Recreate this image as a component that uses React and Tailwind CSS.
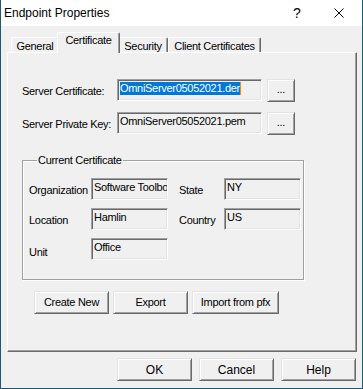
import React from "react";

// Win32 classic dialog: Endpoint Properties / Certificate tab

const raised =
  "border border-t-[#e3e3e3] border-l-[#e3e3e3] border-r-[#696969] border-b-[#696969] shadow-[inset_1px_1px_0_#fff,inset_-1px_-1px_0_#a0a0a0] bg-[#f0f0f0]";
const sunken =
  "border border-t-[#a0a0a0] border-l-[#a0a0a0] border-r-white border-b-white shadow-[inset_1px_1px_0_#696969,inset_-1px_-1px_0_#e3e3e3] bg-[#f0f0f0]";

const Button = ({ children, className = "" }) => (
  <button className={`${raised} h-[23px] flex items-center justify-center text-black ${className}`}>
    {children}
  </button>
);

const Field = ({ value, selected, className = "" }) => (
  <div className={`${sunken} h-[22px] px-[2px] pt-[2px] overflow-hidden whitespace-nowrap leading-[13px] ${className}`}>
    {selected ? (
      <span className="inline-flex items-stretch">
        <span className="bg-[#0078d7] text-white">{value}</span>
        <span className="w-[1px] bg-[#ff8c00]" />
      </span>
    ) : (
      <span>{value}</span>
    )}
  </div>
);

const Label = ({ children }) => (
  <div className="h-[22px] flex items-center pt-[3px] whitespace-nowrap">{children}</div>
);

const tabs = [
  { name: "General", w: "w-[48px]" },
  { name: "Certificate", w: "w-[57px]", active: true },
  { name: "Security", w: "w-[50px]" },
  { name: "Client Certificates", w: "w-[93px]" },
];

const Tabs = () => (
  <div className="flex items-end pl-[4px] h-[26px] pt-[7px]">
    {tabs.map((t) =>
      t.active ? (
        <div
          key={t.name}
          className={`${t.w} box-content -mx-[2px] px-[2px] h-[19px] -mb-[1px] relative z-10 bg-[#f0f0f0] border-t border-l border-white border-r border-r-[#696969] shadow-[inset_-1px_0_0_#a0a0a0] rounded-t-[2px] flex justify-center pt-[1px] leading-[13px]`}
        >
          {t.name}
        </div>
      ) : (
        <div
          key={t.name}
          className={`${t.w} h-[15px] bg-[#f0f0f0] border-t border-l border-white border-r border-r-[#696969] shadow-[inset_-1px_0_0_#a0a0a0] rounded-t-[2px] flex justify-center pt-[2px] leading-[12px]`}
        >
          {t.name}
        </div>
      )
    )}
  </div>
);

export default function App() {
  return (
    <div
      className="w-[363px] h-[389px] bg-[#f0f0f0] border-l border-r border-b border-[#1d5874] flex flex-col text-[11px] tracking-[-0.3px] text-black select-none"
      style={{ fontFamily: '"Liberation Sans", Arial, sans-serif' }}
    >
      {/* title bar */}
      <div className="h-[26px] bg-white flex items-center pl-[3px] text-[12px] tracking-normal">
        <span className="flex-1">Endpoint Properties</span>
        <span className="text-[14px] w-[10px] mr-[31px] leading-none">?</span>
        <svg width="10" height="10" viewBox="0 0 10 10" className="mr-[18px]">
          <path d="M0.5 0.5 L9.5 9.5 M9.5 0.5 L0.5 9.5" stroke="#000" strokeWidth="1" />
        </svg>
      </div>

      <div className="ml-[6px] w-[350px]">
        <Tabs />
        <div className="h-[300px] border-t border-l border-white border-r border-b border-r-[#696969] border-b-[#696969] shadow-[inset_-1px_-1px_0_#a0a0a0] pl-[14px] pt-[26px]">
          <div className="grid grid-cols-[95px_145px_28px] gap-y-[10px] items-start">
            <Label>Server Certificate:</Label>
            <Field value="OmniServer05052021.der" selected />
            <Button className="ml-[5px] w-[28px] items-end pb-[4px]">...</Button>
            <Label>Server Private Key:</Label>
            <Field value="OmniServer05052021.pem" />
            <Button className="ml-[5px] w-[28px] items-end pb-[4px]">...</Button>
          </div>

          <fieldset className="mt-[19px] w-[282px] border border-[#a0a0a0] shadow-[1px_1px_0_#fff,inset_1px_1px_0_#fff] pl-[6px] pb-[17px] pt-[11px]">
            <legend className="ml-[8px] px-[1px] bg-[#f0f0f0] leading-[13px]">Current Certificate</legend>
            <div className="grid grid-cols-[62px_77px_56px_77px] gap-y-[8px]">
              <Label>Organization</Label>
              <Field value="Software Toolbox" />
              <div className="pl-[11px]"><Label>State</Label></div>
              <Field value="NY" />
              <Label>Location</Label>
              <Field value="Hamlin" />
              <div className="pl-[11px]"><Label>Country</Label></div>
              <Field value="US" />
              <div className="pt-[2px]"><Label>Unit</Label></div>
              <Field value="Office" />
            </div>
          </fieldset>

          <div className="flex gap-[4px] mt-[11px] pl-[12px]">
            <Button className="w-[75px]">Create New</Button>
            <Button className="w-[75px]">Export</Button>
            <Button className="w-[87px]">Import from pfx</Button>
          </div>
        </div>
      </div>

      <div className="flex justify-end gap-[7px] mt-[6px] pr-[6px] text-[12px] tracking-normal">
        <Button className="w-[75px]">OK</Button>
        <Button className="w-[75px]">Cancel</Button>
        <Button className="w-[75px]">Help</Button>
      </div>
    </div>
  );
}
